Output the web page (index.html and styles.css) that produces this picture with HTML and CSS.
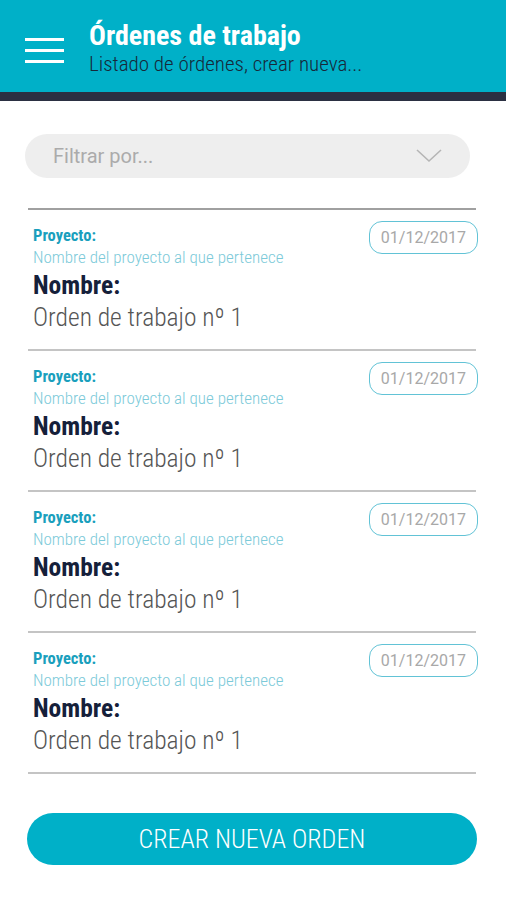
FILE: index.html
```html
<!DOCTYPE html>
<html lang="es">
<head>
<meta charset="UTF-8">
<meta name="viewport" content="width=device-width, initial-scale=1.0">
<title>Órdenes de trabajo</title>
<link rel="stylesheet" href="styles.css">
</head>
<body>
<div id="appBar">
    <div class="menuIcon">
        <span></span><span></span><span></span>
    </div>
    <div class="titles">
        <h1>Órdenes de trabajo</h1>
        <p>Listado de órdenes, crear nueva...</p>
    </div>
</div>
<div id="content">
    <div class="filter">
        <span>Filtrar por...</span>
        <svg width="26" height="14" viewBox="0 0 26 14"><polyline points="1,1 13,12 25,1" fill="none" stroke="#b5b5b5" stroke-width="1.6"/></svg>
    </div>
    <ul class="orders">
        <li class="order">
            <div class="info">
                <div class="projLabel">Proyecto:</div>
                <div class="projName">Nombre del proyecto al que pertenece</div>
                <div class="nameLabel">Nombre:</div>
                <div class="nameValue">Orden de trabajo nº 1</div>
            </div>
            <div class="date">01/12/2017</div>
        </li>
        <li class="order">
            <div class="info">
                <div class="projLabel">Proyecto:</div>
                <div class="projName">Nombre del proyecto al que pertenece</div>
                <div class="nameLabel">Nombre:</div>
                <div class="nameValue">Orden de trabajo nº 1</div>
            </div>
            <div class="date">01/12/2017</div>
        </li>
        <li class="order">
            <div class="info">
                <div class="projLabel">Proyecto:</div>
                <div class="projName">Nombre del proyecto al que pertenece</div>
                <div class="nameLabel">Nombre:</div>
                <div class="nameValue">Orden de trabajo nº 1</div>
            </div>
            <div class="date">01/12/2017</div>
        </li>
        <li class="order">
            <div class="info">
                <div class="projLabel">Proyecto:</div>
                <div class="projName">Nombre del proyecto al que pertenece</div>
                <div class="nameLabel">Nombre:</div>
                <div class="nameValue">Orden de trabajo nº 1</div>
            </div>
            <div class="date">01/12/2017</div>
        </li>
    </ul>
    <button class="createBtn" type="button">CREAR NUEVA ORDEN</button>
</div>
</body>
</html>
```

FILE: styles.css
```css
body {
    margin: 0;
    padding: 0;
    background-color: #fff;
    font-family: "Roboto Condensed", Roboto, sans-serif;
}
#appBar {
    display: flex;
    align-items: flex-start;
    height: 92px;
    background-color: #00b0c8;
    border-bottom: 9px solid #2b3042;
}
.menuIcon {
    width: 39px;
    margin: 38px 25px 0 25px;
    display: flex;
    flex-direction: column;
    gap: 8px;
}
.menuIcon span {
    display: block;
    height: 3px;
    background-color: #fff;
}
.titles {
    padding-top: 21px;
}
.titles h1 {
    margin: 0;
    color: #fff;
    font-size: 28px;
    font-weight: bold;
    line-height: 30px;
}
.titles p {
    margin: 2px 0 0 0;
    color: #16283a;
    font-size: 21px;
    font-weight: 300;
    line-height: 22px;
}
#content {
    padding: 33px 28px 0 28px;
}
.filter {
    display: flex;
    align-items: center;
    justify-content: space-between;
    height: 44px;
    margin: 0 8px 0 -3px;
    padding: 0 28px;
    background-color: #eeeeee;
    border-radius: 22px;
}
.filter span {
    color: #ababab;
    font-family: Roboto, sans-serif;
    font-size: 20px;
}
.orders {
    list-style: none;
    margin: 30px 2px 0 0;
    padding: 0;
    border-top: 2px solid #a0a0a0;
}
.order {
    display: flex;
    justify-content: space-between;
    align-items: flex-start;
    height: 128px;
    padding: 11px 0 0 5px;
    border-bottom: 2px solid #c4c4c4;
}
.projLabel {
    color: #1a9fbd;
    font-size: 16.5px;
    font-weight: bold;
    line-height: 18px;
    margin-top: 6px;
}
.projName {
    color: #7ccad9;
    font-size: 17px;
    font-weight: 300;
    line-height: 18px;
    margin-top: 3px;
}
.nameLabel {
    color: #15203a;
    font-size: 25.5px;
    font-weight: bold;
    line-height: 28px;
    margin-top: 5px;
}
.nameValue {
    color: #555;
    font-size: 25.5px;
    font-weight: 300;
    line-height: 28px;
    margin-top: 4px;
}
.date {
    margin-right: -2px;
    padding: 0 11px;
    height: 31px;
    line-height: 31px;
    border: 1.5px solid #62c3d6;
    border-radius: 13px;
    color: #a8a8a8;
    font-family: Roboto, sans-serif;
    font-size: 16px;
}
.createBtn {
    display: block;
    width: 450px;
    height: 52px;
    margin: 39px 0 0 -1px;
    border: none;
    border-radius: 26px;
    background-color: #00b0c8;
    color: #fff;
    font-family: "Roboto Condensed", Roboto, sans-serif;
    font-size: 26px;
    font-weight: 300;
}
```
